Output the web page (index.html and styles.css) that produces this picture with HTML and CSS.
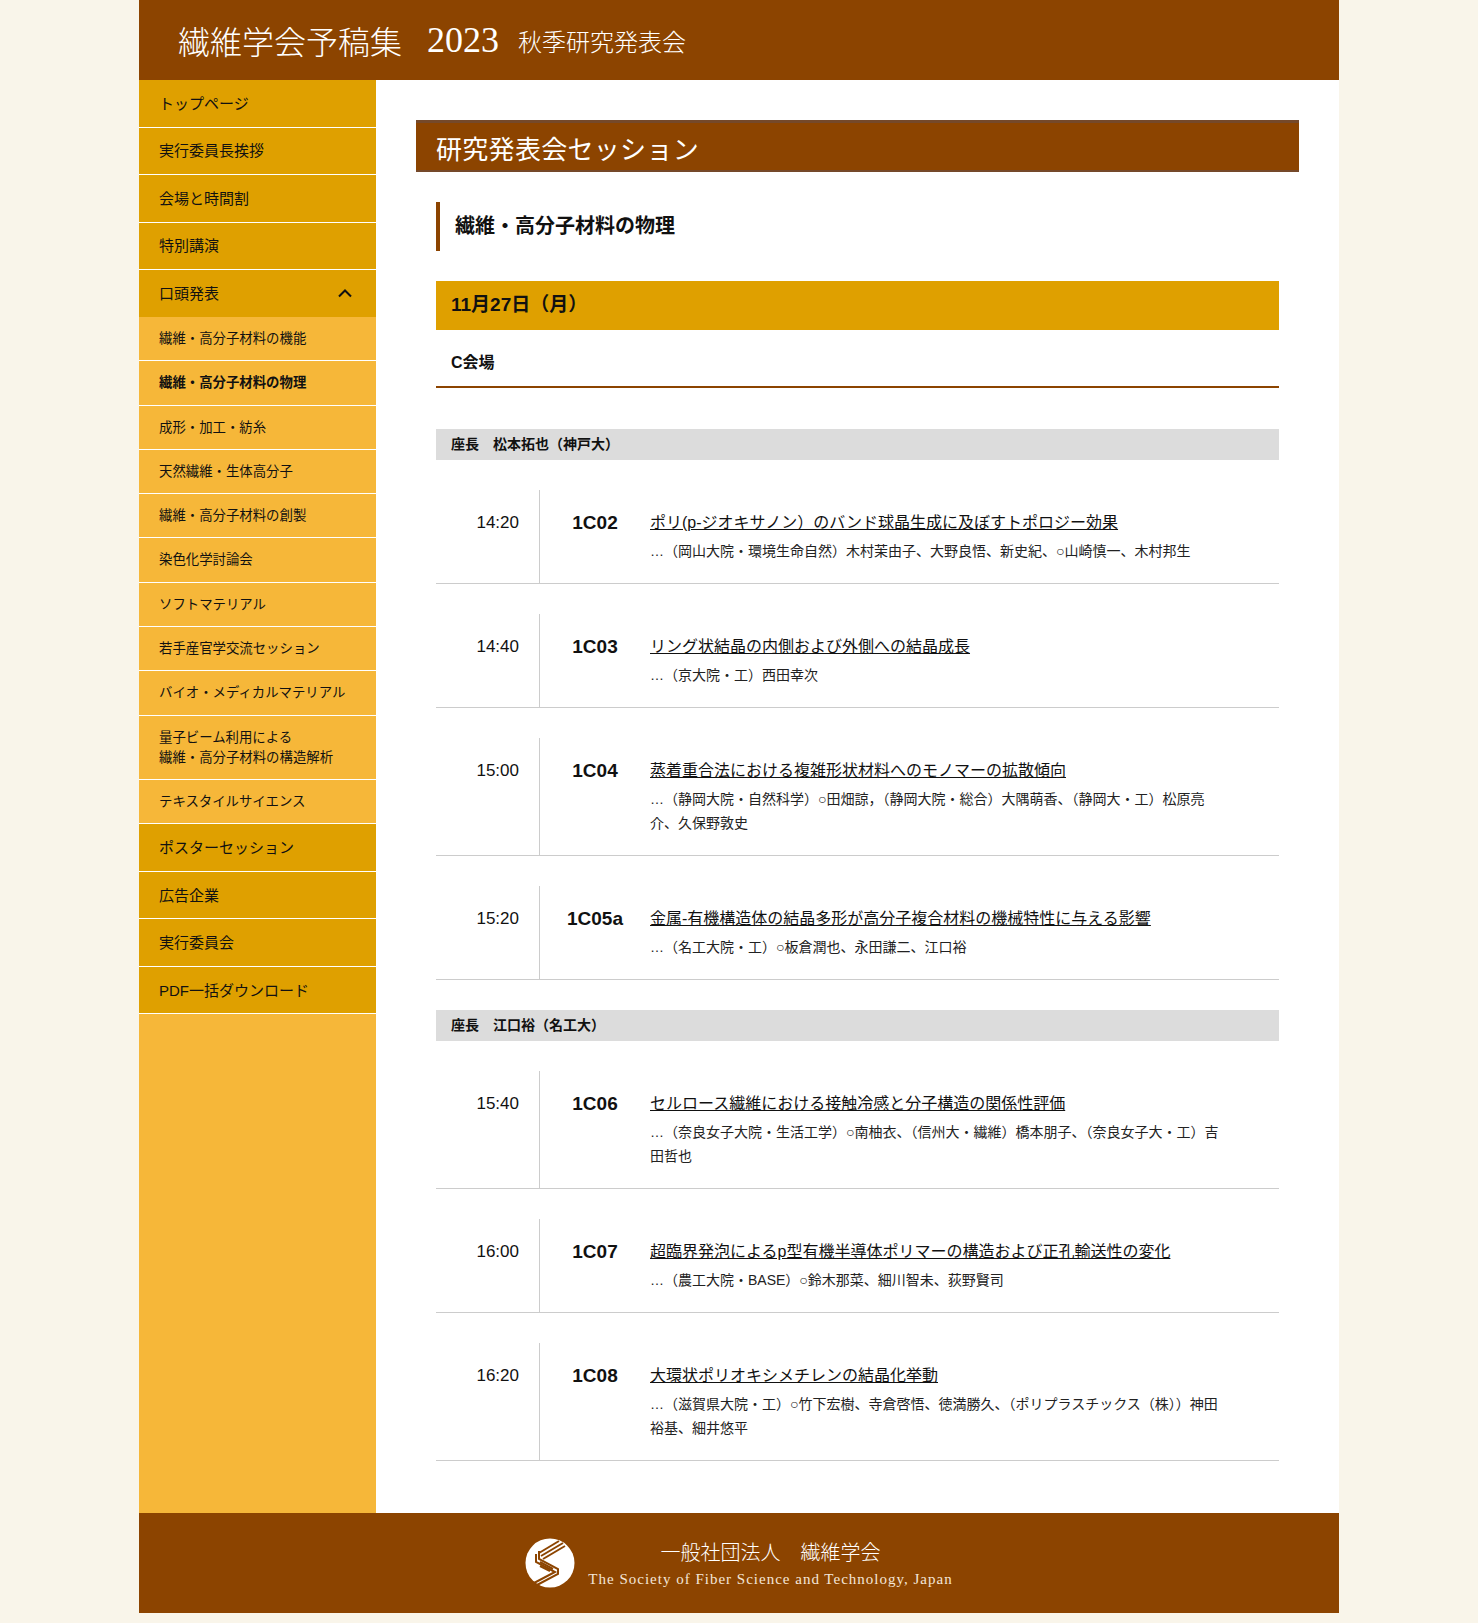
FILE: index.html
```html
<!DOCTYPE html>
<html lang="ja">
<head>
  <meta charset="UTF-8" />
  <meta name="viewport" content="width=device-width, initial-scale=1.0"/>
  <title>繊維学会予稿集 2023 秋季研究発表会</title>
  <link rel="stylesheet" href="styles.css">
</head>
<body>
  <div class="wrapper">
    <header class="site-header">
      <span class="site-title">繊維学会予稿集</span>
      <span class="site-year">2023</span>
      <span class="site-sub">秋季研究発表会</span>
    </header>

    <div class="columns">
      <nav class="sidebar">
        <a class="nav-item" href="#">トップページ</a>
        <a class="nav-item" href="#">実行委員長挨拶</a>
        <a class="nav-item" href="#">会場と時間割</a>
        <a class="nav-item" href="#">特別講演</a>
        <a class="nav-item nav-open" href="#">口頭発表
          <svg class="chevron" width="16" height="10" viewBox="0 0 16 10"><path d="M2 8.5 L8 2.5 L14 8.5" fill="none" stroke="#111" stroke-width="2"/></svg>
        </a>
        <a class="sub-item" href="#">繊維・高分子材料の機能</a>
        <a class="sub-item current" href="#">繊維・高分子材料の物理</a>
        <a class="sub-item" href="#">成形・加工・紡糸</a>
        <a class="sub-item" href="#">天然繊維・生体高分子</a>
        <a class="sub-item" href="#">繊維・高分子材料の創製</a>
        <a class="sub-item" href="#">染色化学討論会</a>
        <a class="sub-item" href="#">ソフトマテリアル</a>
        <a class="sub-item" href="#">若手産官学交流セッション</a>
        <a class="sub-item" href="#">バイオ・メディカルマテリアル</a>
        <a class="sub-item" href="#">量子ビーム利用による<br>繊維・高分子材料の構造解析</a>
        <a class="sub-item" href="#">テキスタイルサイエンス</a>
        <a class="nav-item" href="#">ポスターセッション</a>
        <a class="nav-item" href="#">広告企業</a>
        <a class="nav-item" href="#">実行委員会</a>
        <a class="nav-item" href="#">PDF一括ダウンロード</a>
      </nav>

      <main class="content">
        <h2 class="page-title">研究発表会セッション</h2>
        <div class="inner">
          <h3 class="session-title">繊維・高分子材料の物理</h3>
          <div class="date-bar">11月27日（月）</div>
          <div class="room">C会場</div>

          <div class="chair chair-first">座長　松本拓也（神戸大）</div>

          <div class="talk">
            <div class="talk-time">14:20</div>
            <div class="talk-no">1C02</div>
            <div class="talk-body">
              <a class="talk-title" href="#">ポリ(p-ジオキサノン）のバンド球晶生成に及ぼすトポロジー効果</a>
              <p class="talk-authors">…（岡山大院・環境生命自然）木村茉由子、大野良悟、新史紀、○山崎慎一、木村邦生</p>
            </div>
          </div>
          <div class="talk">
            <div class="talk-time">14:40</div>
            <div class="talk-no">1C03</div>
            <div class="talk-body">
              <a class="talk-title" href="#">リング状結晶の内側および外側への結晶成長</a>
              <p class="talk-authors">…（京大院・工）西田幸次</p>
            </div>
          </div>
          <div class="talk">
            <div class="talk-time">15:00</div>
            <div class="talk-no">1C04</div>
            <div class="talk-body">
              <a class="talk-title" href="#">蒸着重合法における複雑形状材料へのモノマーの拡散傾向</a>
              <p class="talk-authors">…（静岡大院・自然科学）○田畑諒，（静岡大院・総合）大隅萌香、（静岡大・工）松原亮介、久保野敦史</p>
            </div>
          </div>
          <div class="talk">
            <div class="talk-time">15:20</div>
            <div class="talk-no">1C05a</div>
            <div class="talk-body">
              <a class="talk-title" href="#">金属-有機構造体の結晶多形が高分子複合材料の機械特性に与える影響</a>
              <p class="talk-authors">…（名工大院・工）○板倉潤也、永田謙二、江口裕</p>
            </div>
          </div>

          <div class="chair">座長　江口裕（名工大）</div>

          <div class="talk">
            <div class="talk-time">15:40</div>
            <div class="talk-no">1C06</div>
            <div class="talk-body">
              <a class="talk-title" href="#">セルロース繊維における接触冷感と分子構造の関係性評価</a>
              <p class="talk-authors">…（奈良女子大院・生活工学）○南柚衣、（信州大・繊維）橋本朋子、（奈良女子大・工）吉田哲也</p>
            </div>
          </div>
          <div class="talk">
            <div class="talk-time">16:00</div>
            <div class="talk-no">1C07</div>
            <div class="talk-body">
              <a class="talk-title" href="#">超臨界発泡によるp型有機半導体ポリマーの構造および正孔輸送性の変化</a>
              <p class="talk-authors">…（農工大院・BASE）○鈴木那菜、細川智未、荻野賢司</p>
            </div>
          </div>
          <div class="talk">
            <div class="talk-time">16:20</div>
            <div class="talk-no">1C08</div>
            <div class="talk-body">
              <a class="talk-title" href="#">大環状ポリオキシメチレンの結晶化挙動</a>
              <p class="talk-authors">…（滋賀県大院・工）○竹下宏樹、寺倉啓悟、徳満勝久、（ポリプラスチックス（株））神田裕基、細井悠平</p>
            </div>
          </div>
        </div>
      </main>
    </div>

    <footer class="site-footer">
      <svg class="logo" width="50" height="50" viewBox="0 0 50 50">
        <circle cx="25" cy="25" r="24.5" fill="#fff"/>
        <g fill="none" stroke="#8c4400" stroke-width="2">
          <path d="M14 15 L34 3"/>
          <path d="M16 18 L38 5"/>
          <path d="M18 21 L40 8"/>
          <path d="M14 13 L14 21 L33 31 L33 36 L12 47"/>
          <path d="M11 16 L11 24 L30 34 L9 45"/>
          <path d="M15 24 L28 31"/>
          <path d="M15 28 L25 33"/>
        </g>
      </svg>
      <div class="footer-text">
        <div class="footer-ja">一般社団法人　繊維学会</div>
        <div class="footer-en">The Society of Fiber Science and Technology, Japan</div>
      </div>
    </footer>
  </div>
</body>
</html>
```

FILE: styles.css
```css
body {
  margin: 0;
  background-color: #f9f5ea;
  color: #111;
  font-family: "Liberation Sans", "Noto Sans CJK JP", sans-serif;
}

a {
  color: inherit;
  text-decoration: none;
}

.wrapper {
  width: 1200px;
  margin: 0 auto;
  background-color: #fff;
}

.site-header {
  height: 80px;
  background-color: #8c4400;
  color: #fff;
  display: flex;
  align-items: center;
  padding-left: 39px;
  font-family: "Liberation Serif", "Noto Sans CJK JP", serif;
  font-weight: 300;
}

.site-title {
  font-size: 32px;
  font-family: "Noto Sans CJK JP", sans-serif;
  font-weight: 300;
}

.site-year {
  font-size: 36px;
  margin-left: 25px;
}

.site-sub {
  font-size: 24px;
  margin-left: 19px;
  font-family: "Noto Sans CJK JP", sans-serif;
  font-weight: 300;
}

.columns {
  display: flex;
}

.sidebar {
  width: 237px;
  flex-shrink: 0;
  background-color: #f6b739;
  padding-bottom: 499px;
}

.nav-item {
  display: flex;
  justify-content: space-between;
  align-items: center;
  box-sizing: border-box;
  height: 47.5px;
  padding: 0 23px 2px 20px;
  background-color: #dfa000;
  border-bottom: 1px solid #fff;
  font-size: 15px;
}

.nav-open {
  border-bottom: none;
  height: 47px;
}

.sub-item {
  display: block;
  padding: 12px 20px 11.3px;
  background-color: #f6b739;
  border-bottom: 1px solid #fff;
  font-size: 13.4px;
  line-height: 20px;
}

.current {
  font-weight: bold;
}

.content {
  flex: 1;
  padding: 40px 40px 0;
}

.page-title {
  margin: 0;
  height: 52px;
  box-sizing: border-box;
  padding: 8px 20px 0;
  background-color: #8c4400;
  border-top: 3px solid #75492a;
  border-bottom: 2px solid #75492a;
  color: #fff;
  font-size: 26px;
  font-weight: 400;
  line-height: 38px;
  letter-spacing: 0.3px;
}

.inner {
  padding: 30px 20px 0;
}

.session-title {
  margin: 0;
  height: 49px;
  box-sizing: border-box;
  padding-left: 15px;
  border-left: 4px solid #8c4400;
  font-size: 20px;
  line-height: 49px;
}

.date-bar {
  margin-top: 30px;
  height: 49px;
  padding-left: 15px;
  background-color: #dfa000;
  font-size: 19px;
  font-weight: bold;
  line-height: 48px;
}

.room {
  height: 56px;
  box-sizing: border-box;
  padding-left: 15px;
  border-bottom: 2px solid #8c4400;
  font-size: 16px;
  font-weight: bold;
  line-height: 65px;
  height: 58px;
}

.chair {
  margin: 30px 0;
  height: 31px;
  padding-left: 15px;
  background-color: #dcdcdc;
  font-size: 14px;
  font-weight: bold;
  line-height: 31px;
}

.chair-first {
  margin-top: 41px;
}

.talk {
  display: flex;
  margin-bottom: 30px;
  border-bottom: 1px solid #ccc;
}

.talk-time {
  width: 104px;
  box-sizing: border-box;
  padding: 20px 20px 0 0;
  border-right: 1px solid #ccc;
  text-align: right;
  font-size: 17px;
  line-height: 26px;
}

.talk-no {
  width: 110px;
  padding-top: 20px;
  text-align: center;
  font-size: 19px;
  font-weight: bold;
  line-height: 26px;
}

.talk-body {
  width: 580px;
  padding: 20px 0 20px;
}

.talk-title {
  display: block;
  font-size: 16px;
  line-height: 26px;
  text-decoration: underline;
}

.talk-authors {
  margin: 3px 0 0;
  font-size: 14px;
  line-height: 24px;
  color: #222;
}

.site-footer {
  height: 100px;
  background-color: #8c4400;
  color: #fff;
  display: flex;
  justify-content: center;
  align-items: center;
  gap: 13px;
  padding-right: 0;
}

.footer-text {
  text-align: center;
  font-family: "Liberation Serif", "Noto Sans CJK JP", serif;
}

.footer-ja {
  font-family: "Noto Sans CJK JP", sans-serif;
  font-weight: 300;
  font-size: 20px;
  line-height: 30px;
  margin-bottom: 2px;
}

.footer-en {
  font-size: 15px;
  line-height: 20px;
  letter-spacing: 1px;
  color: #f4e6d8;
}
```
